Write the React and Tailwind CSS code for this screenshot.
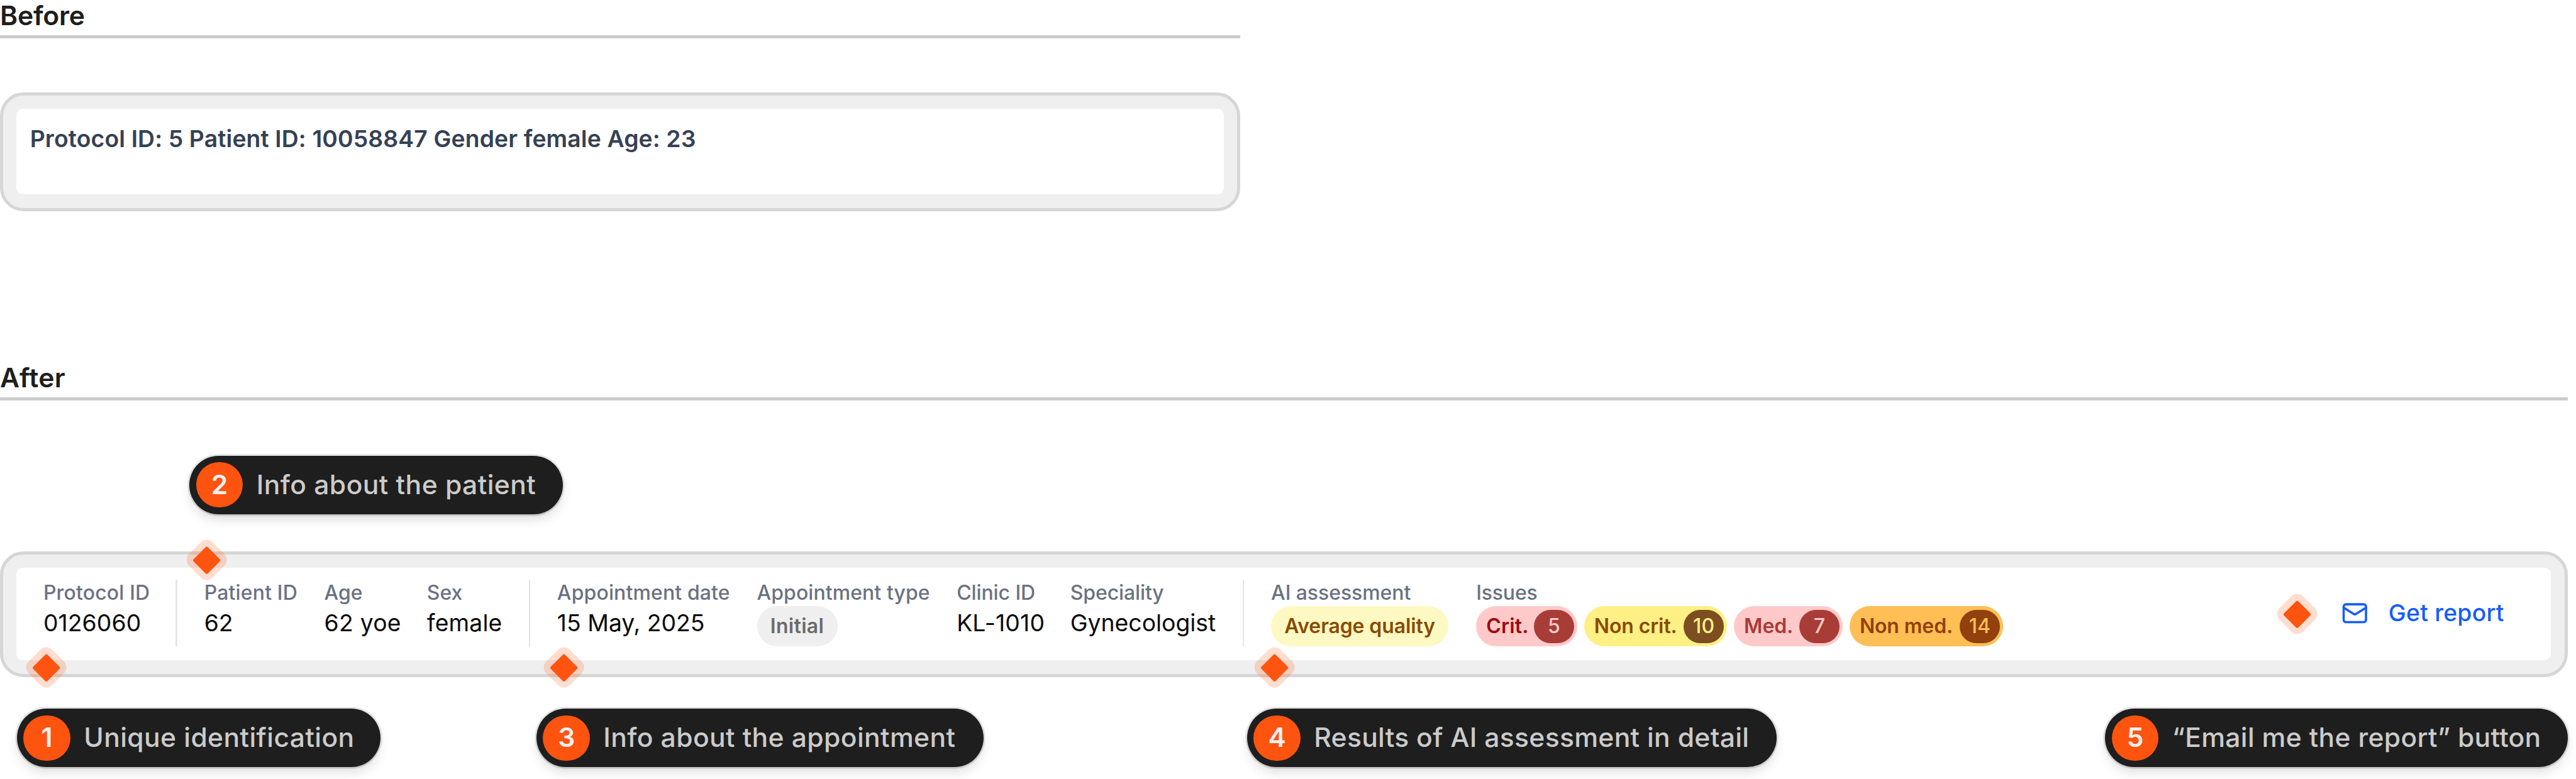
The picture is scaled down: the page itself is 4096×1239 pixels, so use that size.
import { Mail } from "lucide-react";

function SectionTitle({ children, className }) {
  return (
    <h2
      className={`h-[23px] border-b-2 border-[#cbcbcb] text-base leading-[19px] font-semibold text-[#1e1e1e] ${className}`}
    >
      {children}
    </h2>
  );
}

function Frame({ children, className, innerClassName }) {
  return (
    <div className={`relative rounded-[14px] border-2 border-[#d6d6d6] bg-[#efefef] p-2 ${className}`}>
      <div className={`h-full rounded bg-white ${innerClassName}`}>{children}</div>
    </div>
  );
}

function Callout({ number, children, className = "" }) {
  return (
    <div
      className={`flex h-[35px] items-center gap-2 rounded-full bg-[#1e1e1e] pl-1 text-base leading-[19px] font-medium whitespace-nowrap text-[#cbcbcb] shadow-[0_0_0_1px_rgba(0,0,0,0.1),0_1px_1px_rgba(0,0,0,0.05),0_4px_6px_rgba(0,0,0,0.1)] ${className}`}
    >
      <span className="flex h-[27px] w-7 items-center justify-center rounded-full bg-[#ff5310] font-semibold tracking-normal text-[#f0f0f0]">
        {number}
      </span>
      <span>{children}</span>
    </div>
  );
}

function Marker({ className }) {
  return (
    <span
      className={`absolute flex size-5 rotate-45 items-center justify-center rounded-[5px] bg-[#ff5310]/20 ${className}`}
    >
      <span className="size-3 rounded-[1px] bg-[#ff5310]" />
    </span>
  );
}

function Field({ label, children, className = "", labelClassName = "", valueClassName = "" }) {
  return (
    <div className={`flex flex-col items-start whitespace-nowrap ${className}`}>
      <span className={`text-xs leading-4 font-medium text-gray-500 ${labelClassName}`}>{label}</span>
      <div className={`text-sm leading-5 text-neutral-950 ${valueClassName}`}>{children}</div>
    </div>
  );
}

function Divider() {
  return <div className="h-10 w-px bg-neutral-200" />;
}

function Badge({ children, className }) {
  return (
    <span className={`flex h-6 items-center rounded-full px-2 text-xs leading-4 font-semibold ${className}`}>
      {children}
    </span>
  );
}

const issues = [
  {
    label: "Crit.",
    count: 5,
    pill: "w-[60.4px] bg-red-200 text-red-800 tracking-[0.08px]",
    counter: "bg-[#a83c37] text-red-200",
  },
  {
    label: "Non crit.",
    count: 10,
    pill: "w-[85.4px] bg-yellow-200 text-yellow-800 tracking-[-0.04px]",
    counter: "bg-[#7c4e21] text-yellow-200",
  },
  {
    label: "Med.",
    count: 7,
    pill: "w-[65px] bg-red-200 text-[#a83c37] tracking-[-0.03px]",
    counter: "bg-[#a83c37] text-red-200",
  },
  {
    label: "Non med.",
    count: 14,
    pill: "w-[91.7px] bg-[#ffbf54] text-[#943f0d] tracking-[-0.05px]",
    counter: "bg-[#92400d] text-[#ffbf54]",
  },
];

function IssuePill({ label, count, pill, counter }) {
  return (
    <span
      className={`flex h-6 items-center justify-between rounded-full pr-0.5 pl-1.5 text-xs leading-4 font-semibold ${pill}`}
    >
      {label}
      <span className={`flex h-5 w-6 items-center justify-center rounded-full font-medium tracking-normal ${counter}`}>
        {count}
      </span>
    </span>
  );
}

export default function App() {
  return (
    <main className="h-[465px] w-[1537px] overflow-hidden bg-white font-['Inter',sans-serif] [zoom:2.66493]">
      <SectionTitle className="w-[740px] tracking-[-0.08px]">Before</SectionTitle>
      <Frame className="mt-8 h-[71px] w-[740px]" innerClassName="p-2">
        <p className="text-sm leading-5 font-semibold tracking-[0.048px] text-gray-700">
          Protocol ID: 5 Patient ID: 10058847 Gender female Age: 23
        </p>
      </Frame>

      <SectionTitle className="mt-[90px] w-[1532px] tracking-[0.11px]">After</SectionTitle>
      <Callout number={2} className="mt-[33px] ml-[113px] w-[223px] tracking-[0.16px]">
        Info about the patient
      </Callout>

      <Frame
        className="mt-[22px] h-[75px] w-[1532px]"
        innerClassName="flex items-start justify-between pt-[7px] pr-7 pb-2 pl-4"
      >
        <div className="flex gap-4">
          <Field label="Protocol ID" className="w-[63px]" labelClassName="tracking-[0.06px]" valueClassName="tracking-[0.03px]">
            0126060
          </Field>
          <Divider />
          <Field label="Patient ID" className="w-[55.6px]" labelClassName="tracking-[0.06px]">
            62
          </Field>
          <Field label="Age" className="w-[45.3px]" valueClassName="tracking-[0.1px]">
            62 yoe
          </Field>
          <Field label="Sex" className="w-[44.7px]" valueClassName="tracking-[0.05px]">
            female
          </Field>
          <Divider />
          <Field label="Appointment date" className="w-[103.2px]" labelClassName="tracking-[0.05px]">
            15 May, 2025
          </Field>
          <Field label="Appointment type" className="w-[103.2px]" labelClassName="tracking-[0.03px]">
            <Badge className="bg-[#efefef] tracking-[0.12px] text-[#6b6b6b]">Initial</Badge>
          </Field>
          <Field label="Clinic ID" className="w-[51.8px]" labelClassName="tracking-[-0.03px]" valueClassName="tracking-[0.06px]">
            KL-1010
          </Field>
          <Field label="Speciality" className="w-[86.8px]" labelClassName="tracking-[-0.04px]">
            Gynecologist
          </Field>
          <Divider />
          <Field label="AI assessment" className="w-[106.4px]" labelClassName="tracking-[-0.02px]">
            <Badge className="bg-yellow-100 tracking-[-0.04px] text-yellow-800">Average quality</Badge>
          </Field>
          <Field label="Issues" labelClassName="tracking-[-0.06px]">
            <div className="flex gap-1">
              {issues.map((issue) => (
                <IssuePill key={issue.label} {...issue} />
              ))}
            </div>
          </Field>
        </div>
        <button className="flex h-10 w-[97px] items-center gap-3 text-sm leading-5 font-medium tracking-[0.09px] whitespace-nowrap text-blue-600">
          <Mail size={16} className="shrink-0" />
          Get report
        </button>

        <Marker className="top-[-6.5px] left-[111.5px]" />
        <Marker className="top-[57.4px] left-[15.6px]" />
        <Marker className="top-[57.4px] left-[324.5px]" />
        <Marker className="top-[57.4px] left-[748.5px]" />
        <Marker className="top-[25.5px] left-[1358.6px]" />
      </Frame>

      <div className="mt-[19px] grid w-[1532px] grid-cols-[310px_424px_1fr_auto] pl-2.5">
        <Callout number={1} className="w-[217px] tracking-[0.145px]">
          Unique identification
        </Callout>
        <Callout number={3} className="w-[267px] tracking-[0.14px]">
          Info about the appointment
        </Callout>
        <Callout number={4} className="w-[316px] tracking-[0.11px]">
          Results of AI assessment in detail
        </Callout>
        <Callout number={5} className="w-[276px] tracking-[0.11px]">
          “Email me the report” button
        </Callout>
      </div>
    </main>
  );
}
